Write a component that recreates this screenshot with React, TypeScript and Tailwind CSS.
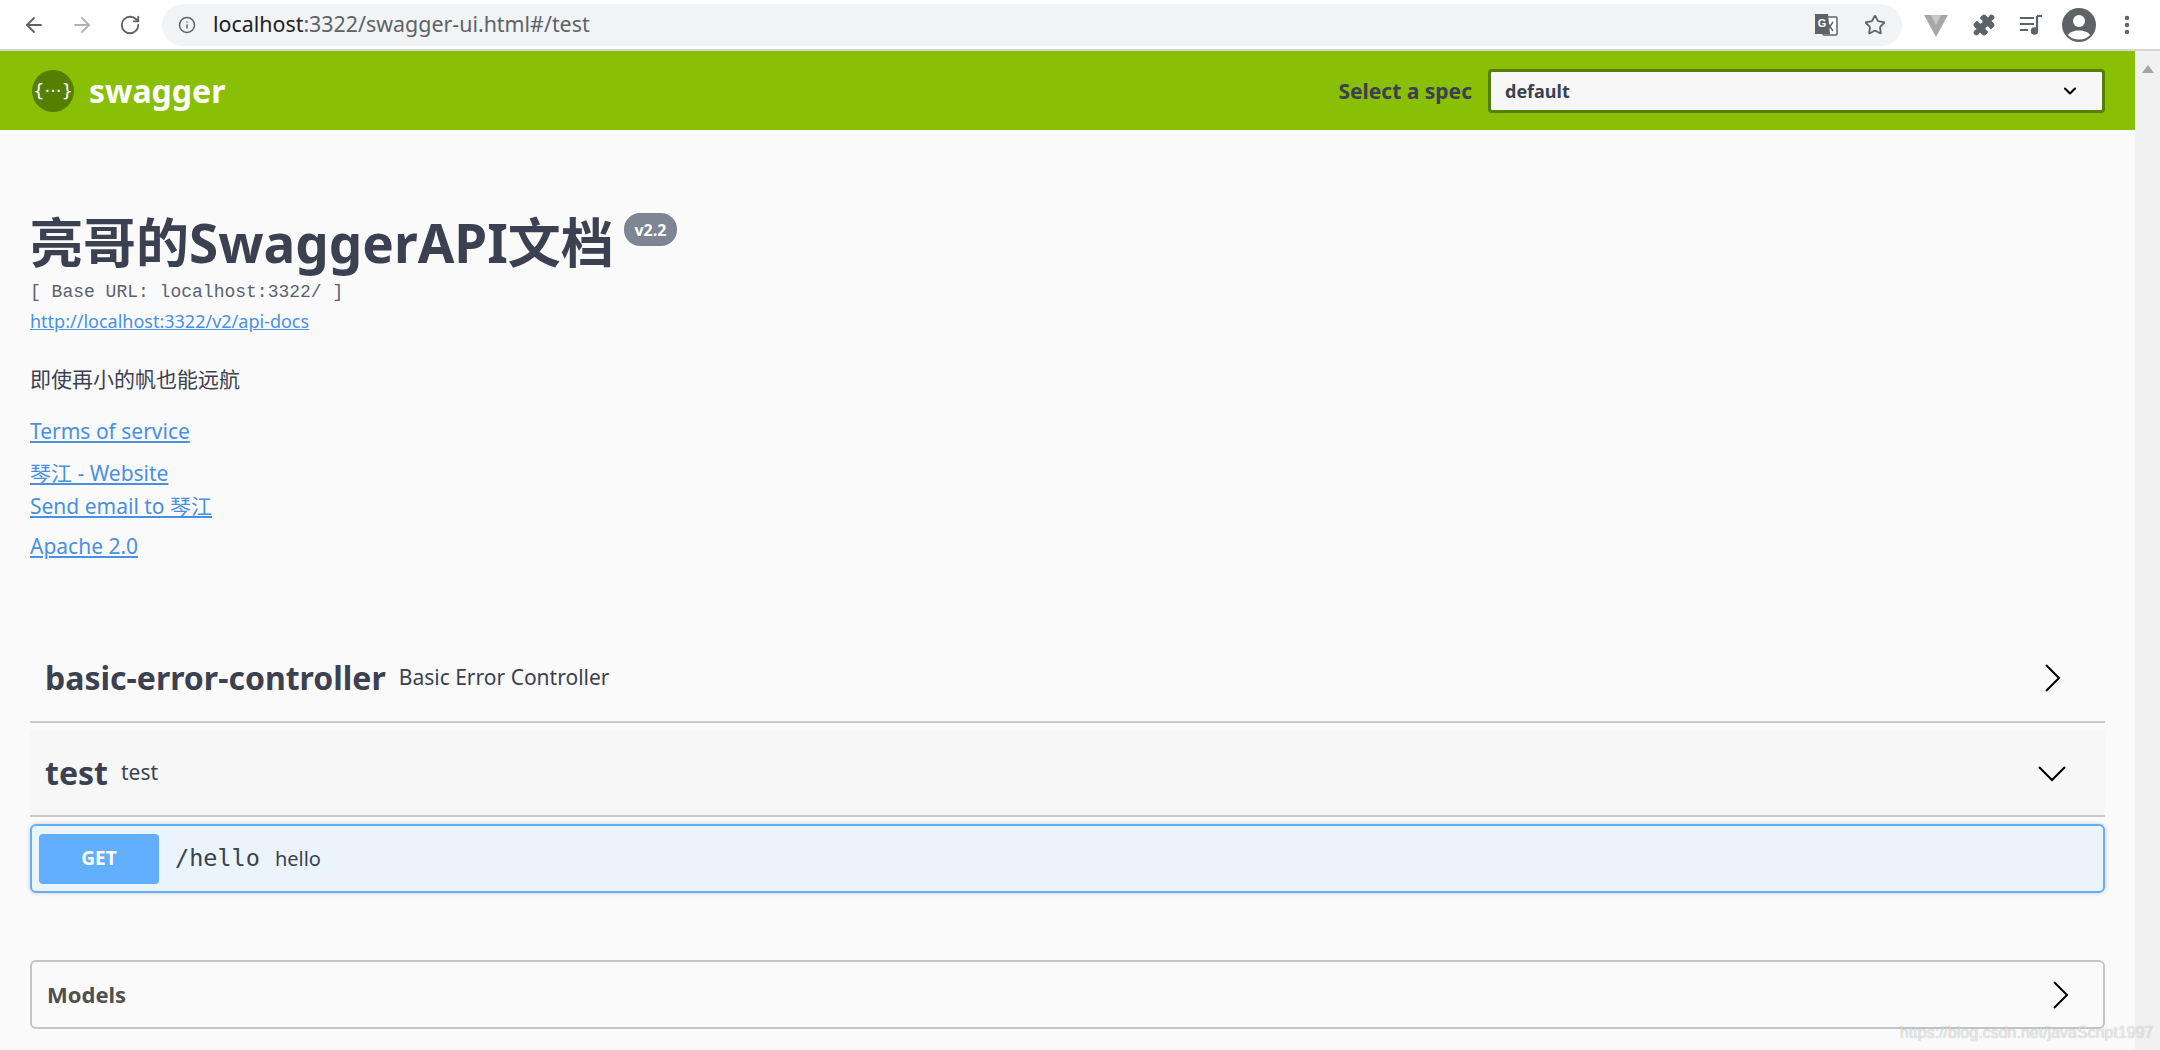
import { ArrowLeft, ArrowRight, RotateCw, Info, Star, Puzzle, EllipsisVertical, ChevronDown } from 'lucide-react'

const sans = 'font-["Noto_Sans","Noto_Sans_CJK_SC",sans-serif]'

function SwaggerLogo() {
  return (
    <svg width="44" height="44" viewBox="0 0 44 44">
      <circle cx="22" cy="22" r="21" fill="#547f00" />
      <text x="22" y="28" textAnchor="middle" fill="#fff" fontSize="18" fontFamily="DejaVu Sans, sans-serif">{'{···}'}</text>
    </svg>
  )
}

function Chevron({ dir }: { dir: 'right' | 'down' }) {
  return (
    <svg width="28" height="28" viewBox="0 0 28 28" fill="none" stroke="#000" strokeWidth="2">
      {dir === 'right' ? <path d="M8 1l13 13L8 27" /> : <path d="M1 8l13 13L27 8" />}
    </svg>
  )
}

function TranslateIcon() {
  return (
    <svg width="24" height="26" viewBox="0 0 24 26">
      <rect x="9" y="5" width="14" height="18" rx="1" fill="#fff" stroke="#5f6368" strokeWidth="1.5" />
      <path d="M13 10l6 9M19 10l-6 9" stroke="#5f6368" strokeWidth="1.4" />
      <path d="M1 2h13l2 20H1z" fill="#5f6368" />
      <text x="8" y="15" textAnchor="middle" fill="#fff" fontSize="11" fontWeight="700" fontFamily="Liberation Sans, sans-serif">G</text>
    </svg>
  )
}

function QueueIcon() {
  return (
    <svg width="24" height="22" viewBox="0 0 24 22" fill="none" stroke="#5f6368" strokeWidth="2.2">
      <path d="M1 4h14M1 10h14M1 16h8" />
      <path d="M18 2v15" />
      <path d="M18 2h5" />
      <circle cx="15.5" cy="17" r="2.6" fill="#5f6368" />
    </svg>
  )
}

function Toolbar() {
  return (
    <div className="h-[51px] bg-white border-b-2 border-[#d5d5d5] flex items-center pl-[22px] text-[#5f6368]">
      <ArrowLeft size={24} strokeWidth={1.8} />
      <ArrowRight size={24} strokeWidth={1.8} className="ml-[24px] text-[#b0b2b5]" />
      <RotateCw size={22} strokeWidth={2} className="ml-[25px]" />
      <div className="ml-[21px] w-[1740px] h-[42px] bg-[#f1f3f4] rounded-full flex items-center pl-[16px] pr-[16px]">
        <Info size={18} strokeWidth={2} />
        <span className={`ml-[17px] text-[21.4px] text-[#5f6368] ${sans}`}>
          <span className="text-[#202124]">localhost</span>:3322/swagger-ui.html#/test
        </span>
        <div className="ml-auto flex items-center gap-[26px]">
          <TranslateIcon />
          <Star size={22} strokeWidth={2} />
        </div>
      </div>
      <svg width="26" height="26" viewBox="0 0 26 26" className="ml-[21px]">
        <path d="M1 3h24L13 25z" fill="#a8a8a8" />
        <path d="M8 3h10l-5 10z" fill="#c8c8c8" />
      </svg>
      <Puzzle size={24} fill="#5f6368" strokeWidth={1} className="ml-[23px]" />
      <span className="ml-[23px]"><QueueIcon /></span>
      <svg width="34" height="34" viewBox="0 0 34 34" className="ml-[19px]">
        <circle cx="17" cy="17" r="17" fill="#5f6368" />
        <circle cx="17" cy="13" r="6" fill="#fff" />
        <path d="M6 27c3-6 19-6 22 0-5 6-17 6-22 0z" fill="#fff" />
      </svg>
      <EllipsisVertical size={24} strokeWidth={2.5} className="ml-[19px]" />
    </div>
  )
}

function TagRow({ name, desc, open }: { name: string; desc: string; open?: boolean }) {
  return (
    <div className={`flex items-center border-b-2 border-[#c9c9cc] px-[15px] ${open ? 'h-[87px] bg-[#f7f7f7]' : 'h-[88px]'}`}>
      <h3 className="text-[32px] font-bold text-[#3b4151]">{name}</h3>
      <span className="ml-[13px] text-[21px] text-[#3b4151]">{desc}</span>
      <span className="ml-auto mr-[24px]">
        <Chevron dir={open ? 'down' : 'right'} />
      </span>
    </div>
  )
}

export default function App() {
  return (
    <div className={`relative h-[1050px] overflow-hidden flex flex-col bg-white ${sans}`}>
      <Toolbar />
      <div className="flex-1 flex min-h-0">
        <div className="flex-1 bg-[#fafafa] min-w-0">
          <header className="h-[79px] bg-[#89bf04] flex items-center pl-[31px] pr-[30px]">
            <SwaggerLogo />
            <span className="ml-[14px] text-[32px] font-bold text-white">swagger</span>
            <span className="ml-auto mt-[2px] text-[21px] font-bold text-[#3b4151]">Select a spec</span>
            <div className="ml-[16px] w-[617px] h-[44px] bg-[#f7f7f7] border-[3px] border-[#547f00] rounded-[4px] flex items-center justify-between pl-[14px] pr-[22px]">
              <span className="mt-[2px] text-[18px] font-bold text-[#3b4151]">default</span>
              <ChevronDown size={20} strokeWidth={2.5} className="text-black" />
            </div>
          </header>

          <main className="px-[30px]">
            <div className="pt-[77px] flex items-start">
              <h2 className="text-[53px] leading-[72px] font-bold text-[#3b4151]">亮哥的SwaggerAPI文档</h2>
              <span className="ml-[10px] mt-[6px] w-[53px] h-[33px] rounded-[16px] bg-[#7d8492] text-white text-[16px] font-bold flex items-center justify-center">v2.2</span>
            </div>
            <div className="mt-[3px] text-[18px] leading-[20px] text-[#5a6070] font-['Liberation_Mono',monospace]">[ Base URL: localhost:3322/ ]</div>
            <a className="block mt-[9px] text-[18px] leading-[20px] text-[#4990e2] underline">http://localhost:3322/v2/api-docs</a>
            <p className="mt-[36px] text-[21px] leading-[24px] text-[#3b4151]">即使再小的帆也能远航</p>
            <a className="block mt-[25px] text-[21px] leading-[30px] text-[#4990e2] underline">Terms of service</a>
            <a className="block mt-[11px] text-[21px] leading-[33px] text-[#4990e2] underline">琴江 - Website</a>
            <a className="block text-[21px] leading-[33px] text-[#4990e2] underline">Send email to 琴江</a>
            <a className="block mt-[7px] text-[21px] leading-[33px] text-[#4990e2] underline">Apache 2.0</a>

            <div className="mt-[72px]">
              <TagRow name="basic-error-controller" desc="Basic Error Controller" />
              <div className="h-[7px]" />
              <TagRow name="test" desc="test" open />
              <div className="mt-[7px] h-[69px] bg-[#ebf3fb] border-2 border-[#61affe] rounded-[6px] flex items-center pl-[7px] shadow-[0_0_4px_rgba(0,0,0,0.19)]">
                <span className="w-[120px] h-[50px] bg-[#61affe] rounded-[4px] text-white text-[19px] font-bold flex items-center justify-center">GET</span>
                <span className="ml-[16px] text-[23.5px] text-[#3b4151] font-['DejaVu_Sans_Mono',monospace]">/hello</span>
                <span className="ml-[15px] text-[20px] text-[#3b4151]">hello</span>
              </div>
              <div className="mt-[67px] h-[69px] border-2 border-[#c4c4c6] rounded-[6px] flex items-center pl-[15px] pr-[29px]">
                <span className="text-[22px] font-bold text-[#505050]">Models</span>
                <span className="ml-auto"><Chevron dir="right" /></span>
              </div>
            </div>
          </main>
        </div>
        <div className="w-[25px] bg-[#f1f1f1] flex justify-center pt-[14px]">
          <div className="w-0 h-0 border-x-[6px] border-x-transparent border-b-[8px] border-b-[#a3a3a3]" />
        </div>
      </div>
      <span className="absolute left-[1900px] top-[1021px] text-[16px] text-white/70 font-['Liberation_Sans',sans-serif] [text-shadow:0_0_1px_rgba(0,0,0,0.35)]">https://blog.csdn.net/javaScript1997</span>
    </div>
  )
}
